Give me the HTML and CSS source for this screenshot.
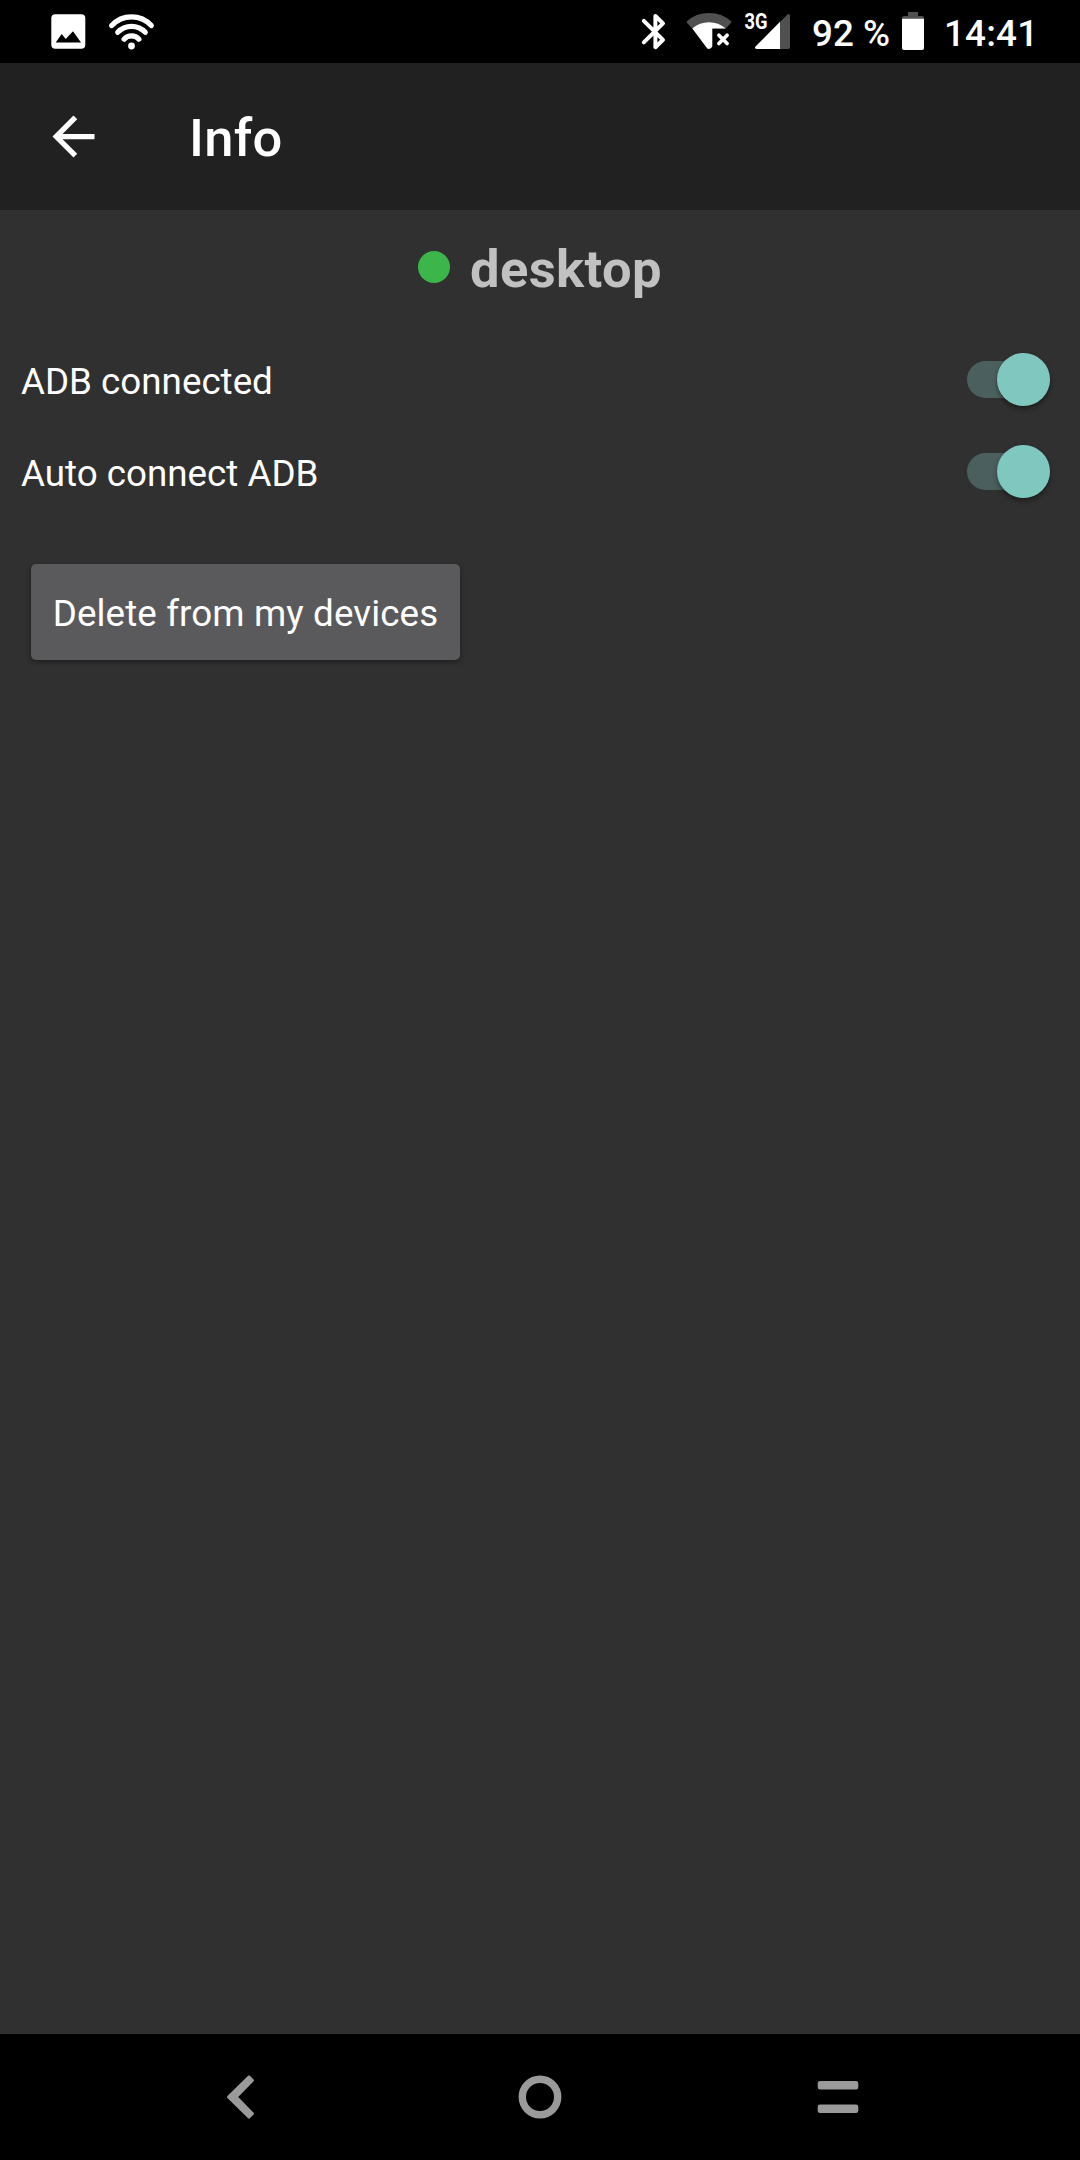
FILE: index.html
```html
<!DOCTYPE html>
<html lang="en">
<head>
<meta charset="utf-8">
<title>Info</title>
<link rel="stylesheet" href="styles.css">
</head>
<body>
<div class="screen">
  <div class="status-bar">
    <svg class="icon-image" width="36" height="63" viewBox="50 0 36 63"><rect x="51.3" y="14.3" width="34" height="34.4" rx="4" fill="#fff"/><path d="M55.7 42.5l6-8.5 4 5 7.3-7.7 8 11.2z" fill="#000"/></svg>
    <svg class="icon-wifi" width="48" height="63" viewBox="108 0 48 63"><g fill="none" stroke="#fff" stroke-width="5.2" stroke-linecap="round"><path d="M111.7 25.5a27 27 0 0 1 39.6 0"/><path d="M117.7 32.3a19 19 0 0 1 27.6 0"/><path d="M124.1 39.2a10 10 0 0 1 14.8 0"/></g><circle cx="131.5" cy="46" r="3.4" fill="#fff"/></svg>
    <svg class="icon-bluetooth" width="30" height="63" viewBox="640 0 30 63"><path d="M643.8 20.8l19.2 19-7.6 7.4V16l7.6 7.4-19.2 19" fill="none" stroke="#fff" stroke-width="4" stroke-linecap="round" stroke-linejoin="round"/></svg>
    <svg class="icon-wifi-off" width="48" height="63" viewBox="685 0 48 63"><path d="M686.7 21.4Q696 13 709 13t22.3 8.4q.2.7-.4 1.5l-5.2 5.6h-33.4l-5.2-5.6q-.7-.7-.4-1.5z" fill="#505050"/><path d="M692.3 28.4Q699.5 22.3 709 22.3t16.7 6.1h-13.4v17.8q-1 2.8-3.3 2.8-1.5 0-2.5-1.5z" fill="#fff"/><path d="M718.9 35.3l8.2 8.2m0-8.2l-8.2 8.2" stroke="#fff" stroke-width="3.7" stroke-linecap="round"/></svg>
    <svg class="icon-signal" width="48" height="63" viewBox="744 0 48 63"><path d="M787.5 14.5q2.5-1.5 2.5 1.5v31q0 2-2 2h-8V22z" fill="#505050"/><path d="M780 21.7V49h-23.5q-2.5-.5-1-2.5z" fill="#fff"/><text x="744.5" y="28.7" class="network" textLength="23" lengthAdjust="spacingAndGlyphs">3G</text></svg>
    <span class="battery-level">92 %</span>
    <svg class="icon-battery" width="24" height="63" viewBox="901 0 24 63"><path d="M908 12h10v4h4q2 0 2 2v1h-22v-1q0-2 2-2h4z" fill="#505050"/><path d="M902 18.7h22V48q0 2-2 2h-18q-2 0-2-2z" fill="#fff"/></svg>
    <span class="clock">14:41</span>
  </div>
  <header class="app-bar">
    <svg class="back" width="63" height="63" viewBox="0 0 24 24"><path d="M20 11H7.83l5.59-5.59L12 4l-8 8 8 8 1.41-1.41L7.83 13H20z" fill="#fff"/></svg>
    <h1 class="title">Info</h1>
  </header>
  <main class="content">
    <div class="device"><span class="online-dot"></span><span class="device-name">desktop</span></div>
    <div class="setting"><span>ADB connected</span><span class="switch"><span class="thumb"></span></span></div>
    <div class="setting"><span>Auto connect ADB</span><span class="switch"><span class="thumb"></span></span></div>
    <button class="delete">Delete from my devices</button>
  </main>
  <nav class="nav-bar">
    <svg width="48" height="126" viewBox="217 2034 48 126"><path d="M228.3 2097l20.700-20.400 3.700 3.700-16.400 16.700 16.400 16.700-3.700 3.700z" fill="#9a9a9a" stroke="#9a9a9a" stroke-width="2.6" stroke-linejoin="round"/></svg>
    <svg width="48" height="126" viewBox="516 2034 48 126"><circle cx="540" cy="2097" r="17.7" fill="none" stroke="#9a9a9a" stroke-width="7.4"/></svg>
    <svg width="48" height="126" viewBox="814 2034 48 126"><path d="M820 2081h36q2.3 0 2.3 2.3v3.9q0 2.3-2.3 2.3h-36q-2.3 0-2.3-2.3v-3.9q0-2.3 2.3-2.3zM820 2104.5h36q2.3 0 2.3 2.3v3.9q0 2.3-2.3 2.3h-36q-2.3 0-2.3-2.3v-3.9q0-2.3 2.3-2.3z" fill="#9a9a9a"/></svg>
  </nav>
</div>
</body>
</html>
```
FILE: styles.css
```css
* { box-sizing: border-box; }
body {
  margin: 0;
  background: #303030;
  color: #fff;
  font-family: Roboto, sans-serif;
  font-size: 36.75px;
}
svg { display: block; flex: none; }
.screen {
  display: flex;
  flex-direction: column;
  width: 1080px;
  height: 2160px;
}
.status-bar {
  display: flex;
  height: 63px;
  padding-left: 50px;
  background: #000;
  font-weight: 500;
  line-height: 68px;
  white-space: nowrap;
}
.icon-wifi { margin-left: 22px; }
.icon-bluetooth { margin-left: 484px; }
.icon-wifi-off { margin-left: 15px; }
.icon-signal { margin-left: 11px; }
.network { font-size: 21.5px; font-weight: 700; fill: #fff; }
.battery-level { width: 89px; margin-left: 20px; }
.clock { margin-left: 19px; letter-spacing: .2px; }
.app-bar {
  display: flex;
  align-items: center;
  height: 147px;
  padding-left: 42px;
  background: #212121;
}
.title {
  margin: 0 0 0 84px;
  padding-top: 3px;
  font-size: 52.5px;
  font-weight: 500;
  line-height: 62px;
  letter-spacing: .3px;
}
.content { flex: 1; }
.device {
  display: flex;
  align-items: center;
  justify-content: center;
  height: 114px;
}
.online-dot {
  width: 32px;
  height: 32px;
  border-radius: 50%;
  background: #3cb54a;
}
.device-name {
  margin-left: 20px;
  padding-top: 3px;
  color: #c1c1c1;
  font-size: 52.5px;
  font-weight: 700;
  line-height: 62px;
  letter-spacing: .4px;
}
.setting {
  display: flex;
  align-items: center;
  justify-content: space-between;
  height: 92px;
  padding: 6px 30px 0 21px;
}
.setting:nth-child(2) { margin-top: 8px; }
.switch {
  display: flex;
  align-items: center;
  justify-content: flex-end;
  width: 83px;
  height: 37px;
  margin-top: -3px;
  border-radius: 19px;
  background: #4b605e;
}
.thumb {
  width: 53px;
  height: 53px;
  flex: none;
  border-radius: 50%;
  background: #80c7c0;
  box-shadow: 0 3px 5px rgba(0, 0, 0, .4);
}
.delete {
  width: 429px;
  height: 96px;
  margin: 48px 0 0 31px;
  padding: 2px 0 0;
  border: 0;
  border-radius: 5px;
  background: #5a5a5c;
  box-shadow: 0 2px 5px rgba(0, 0, 0, .4);
  color: #fff;
  font: inherit;
  letter-spacing: .12px;
  white-space: nowrap;
}
.nav-bar {
  display: flex;
  justify-content: space-between;
  height: 126px;
  padding: 0 218px 0 217px;
  background: #000;
}
```
